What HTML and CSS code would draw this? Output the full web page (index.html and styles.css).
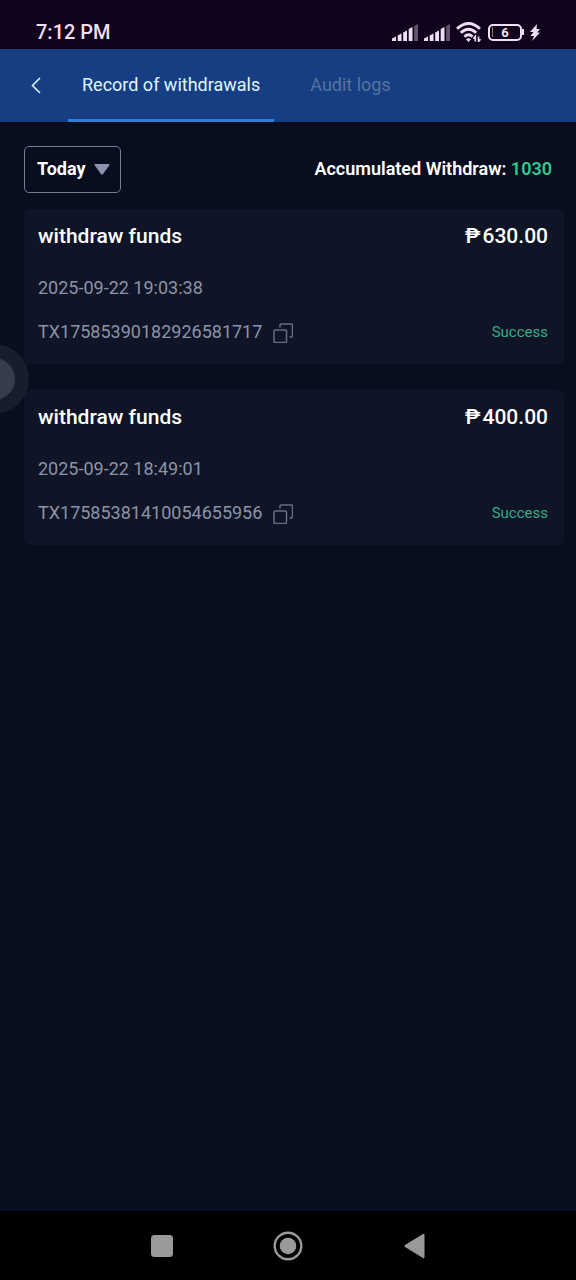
FILE: index.html
```html
<!DOCTYPE html>
<html lang="en">
<head>
<meta charset="utf-8">
<meta name="viewport" content="width=device-width, initial-scale=1">
<title>Record of withdrawals</title>
<link rel="stylesheet" href="styles.css">
</head>
<body>
<svg class="sprite" aria-hidden="true">
  <symbol id="signal" viewBox="0 0 26 17">
    <path d="M0 14.500 4 12.500V17H0zM5.700 11.500l3.800-2V17H5.700zM11.200 8.500l3.800-2V17h-3.800zM16.700 5l3.800-2v14h-3.800z" fill="#eedff4"/>
    <path d="M22.200 2 26 0v17h-3.800z" fill="#64536b"/>
  </symbol>
  <symbol id="copy" viewBox="0 0 20 20">
    <path d="M2 7h10.500q1 0 1 1v10.500q0 1-1 1H2q-1 0-1-1V8q0-1 1-1zM7 4.500V2q0-1 1-1h10.500q1 0 1 1v11q0 1-1 1h-2" fill="none" stroke="currentColor" stroke-width="1.500"/>
  </symbol>
</svg>

<div class="status-bar">
  <time class="clock">7:12 PM</time>
  <div class="indicators">
    <svg class="signal"><use href="#signal"/></svg>
    <svg class="signal"><use href="#signal"/></svg>
    <svg class="wifi" viewBox="0 0 26 20" fill="none" stroke="#eedff4" stroke-width="2.900">
      <path d="M1 6.800q11.500-10.500 23 0M4.800 10.800q7.700-7 15.400 0M8.500 14.700q4-3.800 8 0"/>
      <path d="M10 17.200q2.500-2 5 0L12.500 20z" fill="#eedff4" stroke="none"/>
      <path d="M19.300 19.500v-5l-2 2.300M22.500 14.500v5l2-2.300" stroke-width="1.600"/>
    </svg>
    <span class="battery"><span class="battery-body">6</span></span>
    <svg class="bolt" viewBox="0 0 10 17"><path d="M7 0 0 8h3.500L.5 12H4l-2 5 8-8.500H7L10 5H6.500z" fill="#eedff4"/></svg>
  </div>
</div>

<header class="header">
  <button class="back" type="button" aria-label="Back">
    <svg viewBox="0 0 10 17"><path d="M9 1 1.500 8.500 9 16" fill="none" stroke="currentColor" stroke-width="1.600"/></svg>
  </button>
  <nav class="tabs">
    <a class="tab tab-active" href="#records" aria-current="page">Record of withdrawals</a>
    <a class="tab" href="#audit">Audit logs</a>
  </nav>
</header>

<main class="content" id="records">
  <div class="toolbar">
    <div class="period">
      <select class="period-select" aria-label="Period">
        <option>Today</option>
      </select>
      <svg class="caret" viewBox="0 0 16 11"><path d="M1.500 0h13q1.500 0 .8 1.300L9 10q-1 1.300-2 0L.7 1.300Q0 0 1.500 0z" fill="#8f93b0"/></svg>
    </div>
    <p class="total">Accumulated Withdraw: <span class="total-value">1030</span></p>
  </div>

  <ul class="records">
    <li class="record">
      <div class="row">
        <h2 class="title">withdraw funds</h2>
        <span class="amount"><span>₱</span><span>630.00</span></span>
      </div>
      <time class="date">2025-09-22 19:03:38</time>
      <div class="row">
        <div class="transaction">
          <span>TX17585390182926581717</span>
          <button class="copy" type="button" aria-label="Copy transaction number"><svg><use href="#copy"/></svg></button>
        </div>
        <span class="state">Success</span>
      </div>
    </li>
    <li class="record">
      <div class="row">
        <h2 class="title">withdraw funds</h2>
        <span class="amount"><span>₱</span><span>400.00</span></span>
      </div>
      <time class="date">2025-09-22 18:49:01</time>
      <div class="row">
        <div class="transaction">
          <span>TX17585381410054655956</span>
          <button class="copy" type="button" aria-label="Copy transaction number"><svg><use href="#copy"/></svg></button>
        </div>
        <span class="state">Success</span>
      </div>
    </li>
  </ul>
</main>

<button class="floating" type="button" aria-label="Quick menu"></button>

<nav class="system-nav" aria-label="System">
  <button class="system-button" type="button" aria-label="Recent apps">
    <svg viewBox="0 0 30 30"><rect x="4" y="4" width="22" height="22" rx="3.500" fill="#999"/></svg>
  </button>
  <button class="system-button" type="button" aria-label="Home">
    <svg viewBox="0 0 30 30"><circle cx="15" cy="15" r="13.300" fill="none" stroke="#999" stroke-width="2.400"/><circle cx="15" cy="15" r="8.300" fill="#999"/></svg>
  </button>
  <button class="system-button" type="button" aria-label="Back">
    <svg viewBox="0 0 30 30"><path d="M24 3q1.500-1 1.500 1v22q0 2-1.500 1L6 16q-1.500-1 0-2z" fill="#999"/></svg>
  </button>
</nav>
</body>
</html>
```
FILE: styles.css
```css
* {
  box-sizing: border-box;
}

body {
  display: flex;
  flex-direction: column;
  min-height: 100vh;
  margin: 0;
  background: #080e1e;
  color: #fff;
  font-family: Roboto, "Noto Sans", sans-serif;
  font-size: 18px;
  line-height: 24px;
}

button {
  padding: 0;
  border: 0;
  background: none;
  color: inherit;
}

svg {
  display: block;
}

.sprite {
  position: absolute;
  width: 0;
  height: 0;
}

.status-bar {
  display: flex;
  align-items: flex-end;
  justify-content: space-between;
  height: 49px;
  padding: 0 36px 5px;
  background: #12031c;
  color: #eedff4;
}

.clock {
  font-size: 20px;
  font-weight: 500;
}

.indicators {
  display: flex;
  align-items: center;
  gap: 6px;
  height: 24px;
}

.signal {
  width: 26px;
  height: 17px;
}

.wifi {
  width: 26px;
  height: 20px;
}

.battery {
  display: flex;
  align-items: center;
}

.battery::after {
  width: 2px;
  height: 6px;
  background: #eedff4;
  content: "";
}

.battery-body {
  width: 34px;
  height: 17px;
  border: 2px solid #eedff4;
  border-radius: 5px;
  background: linear-gradient(#8c7b42, #8c7b42) 2px center / 1px 10px no-repeat;
  font-size: 13px;
  font-weight: 700;
  line-height: 14px;
  text-align: center;
}

.bolt {
  width: 10px;
  height: 17px;
}

.header {
  display: flex;
  height: 73px;
  background: #153f82;
}

.back {
  display: flex;
  align-items: center;
  justify-content: center;
  width: 68px;
  padding-left: 4px;
  color: #d8f4ff;
}

.back svg {
  width: 10px;
  height: 17px;
}

.tabs {
  display: flex;
  gap: 22px;
}

.tab {
  display: flex;
  align-items: center;
  padding: 2px 14px 0;
  border-bottom: 3px solid transparent;
  color: #5673a0;
  text-decoration: none;
}

.tab-active {
  border-color: #2f80d4;
  color: #e0f4ff;
}

.content {
  flex: 1;
  padding: 24px 12px 24px 24px;
}

.toolbar {
  display: flex;
  align-items: center;
  justify-content: space-between;
  margin-bottom: 16px;
  padding-right: 12px;
  font-weight: 700;
}

.period {
  display: grid;
  align-items: center;
}

.period-select {
  grid-area: 1 / 1;
  height: 47px;
  padding: 0 34px 2px 12px;
  border: 1px solid #777c95;
  border-radius: 5px;
  appearance: none;
  background: transparent;
  color: #fff;
  font: inherit;
}

.caret {
  grid-area: 1 / 1;
  justify-self: end;
  width: 16px;
  height: 11px;
  margin-right: 11px;
  pointer-events: none;
}

.total {
  margin: 0;
  padding-bottom: 2px;
  font-weight: 600;
}

.total-value {
  color: #35c58e;
}

.records {
  display: grid;
  gap: 26px;
  margin: 0;
  padding: 0;
  list-style: none;
}

.record {
  display: grid;
  gap: 20px;
  padding: 15px 16px 20px 14px;
  border-radius: 6px;
  background: #0f1527;
}

.row {
  display: flex;
  align-items: center;
  justify-content: space-between;
}

.title,
.amount {
  margin: 0;
  font-size: 21px;
  font-weight: 500;
}

.amount {
  display: flex;
  gap: 2px;
}

.date,
.transaction {
  color: #8c93a6;
}

.date {
  margin-top: 8px;
}

.transaction {
  display: flex;
  align-items: center;
  gap: 11px;
}

.copy {
  padding-top: 2px;
  color: #686e80;
}

.copy svg {
  width: 20px;
  height: 20px;
}

.state {
  color: #36ac84;
  font-size: 15px;
}

.floating {
  position: fixed;
  top: 344px;
  left: -41px;
  width: 70px;
  height: 70px;
  border: 14px solid #171e2b;
  border-radius: 50%;
  background: #363c49;
}

.system-nav {
  display: flex;
  align-items: center;
  justify-content: center;
  gap: 96px;
  height: 69px;
  background: #000;
}

.system-button svg {
  width: 30px;
  height: 30px;
}
```
